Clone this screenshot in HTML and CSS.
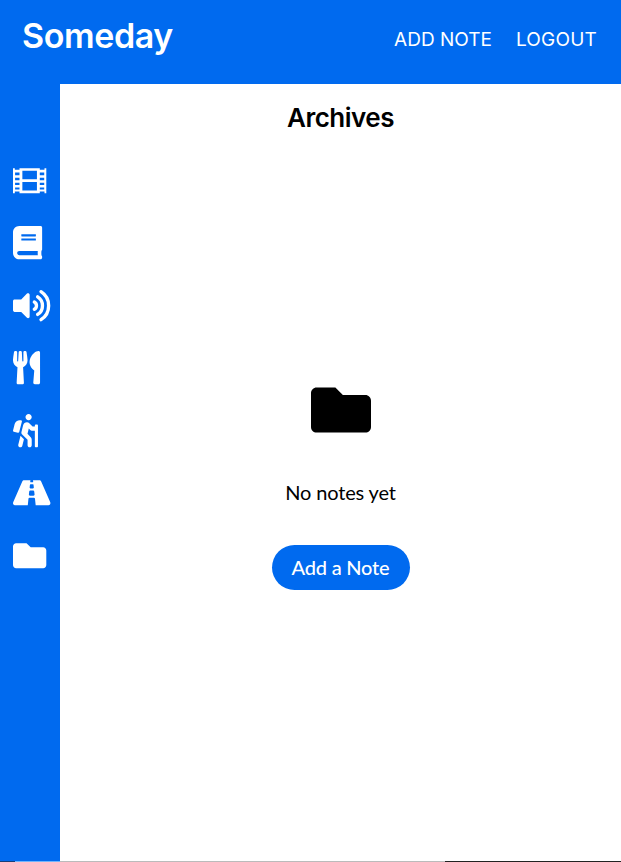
FILE: index.html
```html
<!DOCTYPE html>
<html lang="en">
<head>
<meta charset="utf-8">
<title>Someday</title>
<link rel="stylesheet" href="styles.css">
</head>
<body>
<header class="topbar">
  <h1 class="brand">Someday</h1>
  <nav class="links"><a class="add">ADD NOTE</a><a class="logout">LOGOUT</a></nav>
</header>
<div class="layout">
  <aside class="sidebar">
    <svg viewBox="0 0 512 512"><path fill-rule="evenodd" d="M0 64h28v24h72V64h312v24h72V64h28v384h-28v-24h-72v24H100v-24H28v24H0zM32 132v40h68v-40zM32 212v36h68v-36zM32 288v36h68v-36zM32 360v32h68v-32zM412 132v40h68v-40zM412 212v36h68v-36zM412 288v36h68v-36zM412 360v32h68v-32zM144 104v130h224V104zM144 276v130h224V276z"/></svg>
    <svg viewBox="0 0 448 512"><path d="M448 360V24c0-13.3-10.7-24-24-24H96C43 0 0 43 0 96v320c0 53 43 96 96 96h328c13.3 0 24-10.7 24-24v-16c0-7.5-3.5-14.3-8.9-18.7-4.2-15.4-4.2-59.3 0-74.7 5.4-4.3 8.9-11.1 8.9-18.6zM128 134c0-3.3 2.7-6 6-6h212c3.3 0 6 2.7 6 6v20c0 3.3-2.7 6-6 6H134c-3.3 0-6-2.7-6-6v-20zm0 64c0-3.3 2.7-6 6-6h212c3.3 0 6 2.7 6 6v20c0 3.3-2.7 6-6 6H134c-3.3 0-6-2.7-6-6v-20zm253.4 250H96c-17.7 0-32-14.3-32-32 0-17.6 14.4-32 32-32h285.4c-1.9 17.1-1.9 46.9 0 64z"/></svg>
    <svg viewBox="0 0 576 512"><path d="M215.03 71.05L126.06 160H24c-13.26 0-24 10.74-24 24v144c0 13.25 10.74 24 24 24h102.06l88.97 88.95c15.03 15.03 40.97 4.47 40.97-16.97V88.02c0-21.46-25.96-31.98-40.97-16.97z"/><path class="wave" d="M328 200a64 64 0 0 1 0 112M379 121a160 160 0 0 1 0 270M431 41a256 256 0 0 1 0 430"/></svg>
    <svg viewBox="0 0 416 512"><path d="M207.9 15.2c.8 4.7 16.1 94.5 16.1 128.8 0 52.3-27.8 89.6-68.9 104.6L168 486.7c.7 13.7-10.2 25.3-24 25.3H80c-13.7 0-24.7-11.5-24-25.3l12.9-238.1C27.7 233.6 0 196.2 0 144 0 109.6 15.3 19.9 16.1 15.2 19.3-5.1 61.4-5.4 64 16.3v141.2c1.3 3.4 15.1 3.2 16 0 1.4-25.3 7.9-139.2 8-141.8 3.3-20.8 44.7-20.8 47.9 0 .2 2.7 6.6 116.5 8 141.8.9 3.2 14.8 3.4 16 0V16.3c2.6-21.6 44.8-21.4 48-1.1zm119.2 285.7l-15 185.1c-1.2 14 9.9 26 23.9 26h56c13.3 0 24-10.7 24-24V24c0-13.2-10.7-24-24-24-82.5 0-221.4 178.5-64.9 300.9z"/></svg>
    <svg viewBox="0 0 384 512"><path d="M80.95 472.23c-4.28 17.16 6.14 34.53 23.28 38.81 2.61.66 5.22.95 7.8.95 14.33 0 27.37-9.7 31.02-24.23l25.24-100.97-52.78-52.78-34.56 138.22zm14.89-196.12L137 117c2.19-8.42-3.14-16.95-11.92-19.06-43.88-10.52-88.35 15.07-99.32 57.17L.49 253.24c-2.19 8.42 3.14 16.95 11.92 19.06l63.56 15.25c8.79 2.1 17.68-3.02 19.87-11.44zM368 160h-16c-8.84 0-16 7.16-16 16v16h-34.75l-46.78-46.78C243.38 134.11 228.61 128 212.91 128c-27.02 0-50.47 18.3-57.03 44.52l-26.92 107.72a32.012 32.012 0 0 0 8.42 30.39L224 397.25V480c0 17.67 14.33 32 32 32s32-14.33 32-32v-82.75c0-17.09-6.66-33.16-18.75-45.25l-46.82-46.82c.15-.5.49-.89.62-1.41l19.89-79.57 22.43 22.43c6 6 14.14 9.38 22.62 9.38h48v240c0 8.84 7.16 16 16 16h16c8.84 0 16-7.16 16-16V176c.01-8.84-7.15-16-15.99-16zM240 96c26.51 0 48-21.49 48-48S266.51 0 240 0s-48 21.49-48 48 21.49 48 48 48z"/></svg>
    <svg viewBox="0 0 576 512"><path d="M573.19 402.67l-139.79-320C428.43 71.29 417.6 64 405.68 64h-97.59l2.45 23.16c.5 4.72-3.21 8.84-7.96 8.84h-29.16c-4.75 0-8.46-4.12-7.96-8.84L267.91 64h-97.59c-11.93 0-22.76 7.29-27.73 18.67L2.8 402.67C-6.45 423.86 8.31 448 30.54 448h196.84l10.31-97.68c.86-8.14 7.72-14.32 15.91-14.32h68.8c8.19 0 15.05 6.18 15.91 14.32L348.62 448h196.84c22.23 0 36.99-24.14 27.73-45.33zM260.4 135.16a8 8 0 0 1 7.96-7.16h39.29c4.09 0 7.53 3.09 7.96 7.16l4.6 43.58c.75 7.09-4.81 13.26-11.93 13.26h-40.54c-7.13 0-12.68-6.17-11.93-13.26l4.59-43.58zM315.64 304h-55.29c-9.5 0-16.91-8.23-15.91-17.68l5.07-48c.86-8.14 7.72-14.32 15.91-14.32h45.15c8.19 0 15.05 6.18 15.91 14.32l5.07 48c1 9.45-6.41 17.68-15.91 17.68z"/></svg>
    <svg viewBox="0 0 512 512"><path d="M464 128H272l-64-64H48C21.49 64 0 85.49 0 112v288c0 26.51 21.49 48 48 48h416c26.51 0 48-21.49 48-48V176c0-26.51-21.49-48-48-48z"/></svg>
  </aside>
  <main class="content">
    <h2 class="title">Archives</h2>
    <svg class="folder" viewBox="0 0 512 512"><path d="M464 128H272l-64-64H48C21.49 64 0 85.49 0 112v288c0 26.51 21.49 48 48 48h416c26.51 0 48-21.49 48-48V176c0-26.51-21.49-48-48-48z"/></svg>
    <p class="empty">No notes yet</p>
    <button class="button">Add a Note</button>
  </main>
</div>
<footer class="edge"></footer>
</body>
</html>
```
FILE: styles.css
```css
* { box-sizing: border-box; }
body { margin: 0; height: 862px; display: flex; flex-direction: column; overflow: hidden; background: #fff; color: #000; font-family: Lato, sans-serif; }
.topbar { height: 84px; flex: none; display: flex; justify-content: space-between; align-items: flex-start; padding: 15px 24px 0 22px; background: #006aef; color: #fff; font-family: Inter, sans-serif; }
.brand { margin: 0; font-size: 34px; line-height: 42px; font-weight: 600; letter-spacing: -0.4px; }
.links { display: flex; gap: 24px; padding-top: 13px; font-size: 19px; line-height: 24px; }
.add, .logout { white-space: nowrap; }
.logout { letter-spacing: 0.2px; }
.layout { flex: 1; display: flex; min-height: 0; }
.sidebar { width: 60px; flex: none; padding: 80px 0 0 13px; background: #006aef; display: flex; flex-direction: column; align-items: flex-start; gap: 29.2px; }
.sidebar svg { height: 33.3px; flex: none; fill: #fff; overflow: visible; }
.sidebar .wave { fill: none; stroke: #fff; stroke-width: 52; stroke-linecap: round; }
.content { flex: 1; display: flex; flex-direction: column; align-items: center; }
.title { margin: 18px 0 0; font: 600 26px/32px Inter, sans-serif; letter-spacing: -0.5px; }
.folder { width: 60px; height: 60px; margin-top: 246px; }
.empty { margin: 37px 0 0; font-size: 20px; line-height: 30px; letter-spacing: -0.15px; }
.button { margin-top: 38px; width: 138px; height: 45px; padding: 0; border: 0; border-radius: 23px; background: #006aef; color: #fff; font: 500 20px/45px Lato, sans-serif; letter-spacing: -0.2px; }
.edge { height: 1px; flex: none; background: linear-gradient(90deg, #173e79 0 15px, #72b5fb 15px 60px, #bbb 60px 445px, #222 445px); }
```
